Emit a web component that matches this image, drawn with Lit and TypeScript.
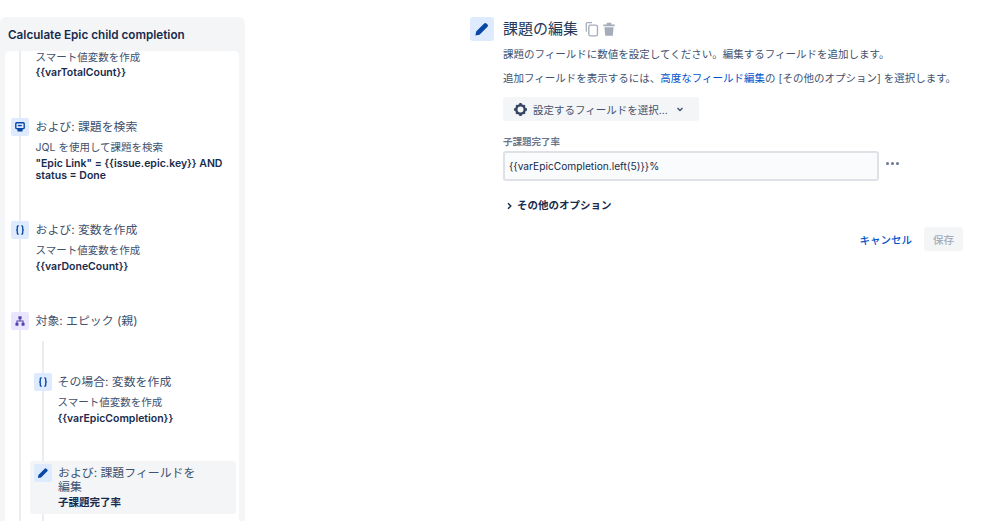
import { LitElement, html, css, svg } from "lit";
import { customElement } from "lit/decorators.js";

const pencil = svg`<path d="M2.2 13.8 L2.8 10.2 L9.9 3.1 a1.4 1.4 0 0 1 2 0 L12.9 4.1 a1.4 1.4 0 0 1 0 2 L5.8 13.2 Z" fill="#0747a6"/>`;
const braces = svg`<path d="M6.6 3.2 H6 a1.1 1.1 0 0 0 -1.1 1.1 V6.9 a1.1 1.1 0 0 1 -1.2 1.1 a1.1 1.1 0 0 1 1.2 1.1 V11.7 a1.1 1.1 0 0 0 1.1 1.1 H6.6 M9.4 3.2 H10 a1.1 1.1 0 0 1 1.1 1.1 V6.9 a1.1 1.1 0 0 0 1.2 1.1 a1.1 1.1 0 0 0 -1.2 1.1 V11.7 a1.1 1.1 0 0 1 -1.1 1.1 H9.4" fill="none" stroke="#0747a6" stroke-width="1.5"/>`;
const search = svg`<rect x="3.2" y="3.2" width="9.6" height="6.6" rx="1" fill="none" stroke="#0747a6" stroke-width="1.6"/><rect x="5.6" y="5.6" width="4.4" height="1.6" fill="#0747a6"/><path d="M4.8 10.4 H11.2 L10.8 13.2 H5.2 Z" fill="#0747a6"/>`;
const tree = svg`<rect x="6.2" y="2.6" width="3.6" height="3.4" fill="#5243aa"/><rect x="2.8" y="10" width="3.4" height="3.4" fill="#5243aa"/><rect x="9.8" y="10" width="3.4" height="3.4" fill="#5243aa"/><path d="M8 5.5 V8 M4.5 10.5 V8 H11.5 V10.5" fill="none" stroke="#5243aa" stroke-width="1.2"/>`;

@customElement("app-root")
export class AppRoot extends LitElement {
  static styles = css`
    :host {
      display: block;
      width: 999px;
      height: 521px;
      overflow: hidden;
      background: #fff;
      font-family: Inter, "Noto Sans CJK JP", sans-serif;
      color: #42526e;
    }
    .page { display: flex; height: 521px; }
    .side {
      width: 245px;
      margin-top: 17px;
      background: #f4f5f7;
      border-radius: 6px 6px 0 0;
      display: flex;
      flex-direction: column;
      flex: none;
    }
    .side-title {
      font-size: 11.7px;
      font-weight: 600;
      color: #172b4d;
      line-height: 16px;
      padding: 10px 0 8px 8px;
    }
    .card {
      flex: 1;
      margin: 0 6px 0 5px;
      background: #fff;
      border-radius: 5px 5px 0 0;
      position: relative;
      overflow: hidden;
    }
    .line { position: absolute; width: 2px; background: #ebecf0; }
    .line.outer { left: 14px; top: 0; bottom: 0; }
    .line.inner { left: 37px; top: 290px; bottom: 0; }
    .step { position: relative; display: flex; gap: 6.5px; padding-left: 6px; }
    .step.nested { padding-left: 29px; gap: 5.5px; }
    .icon {
      width: 18px; height: 18px; flex: none; border-radius: 2px;
      background: #deebff; display: flex; align-items: center; justify-content: center;
    }
    .icon.purple { background: #eae6ff; }
    .icon svg { width: 14px; height: 14px; display: block; }
    .body { min-width: 0; }
    .t { font-size: 11.9px; line-height: 15px; color: #42526e; margin-top: 1px; }
    .d { font-size: 10.5px; line-height: 14px; color: #42526e; margin-top: 7px; }
    .b { font-size: 10.5px; font-weight: 600; line-height: 12.5px; color: #172b4d; margin-top: 3px; }
    .first { padding-left: 30.5px; position: relative; }
    .first .d { margin-top: 0; }
    .first .b { margin-top: 2px; }
    .s2 { margin-top: 38px; }
    .s3 { margin-top: 38px; }
    .s4 { margin-top: 39px; }
    .s5 { margin-top: 43px; }
    .selwrap {
      position: relative;
      margin: 35px 3px 0 25px;
      background: #f4f5f7;
      border-radius: 3px;
      padding: 3px 0 5px 4px;
      display: flex;
      gap: 6px;
      height: 45px;
    }
    .selwrap .t { width: 146px; line-height: 14.5px; margin-top: 2px; }
    .selwrap .b { margin-top: 2px; }

    .main { flex: 1; padding: 17px 0 0 225px; min-width: 0; }
    .head { display: flex; align-items: center; gap: 9px; height: 24px; }
    .head .icon { width: 24px; height: 24px; border-radius: 3px; }
    .head .icon svg { width: 18px; height: 18px; }
    .head h1 { margin: 0; font-size: 15px; font-weight: 400; color: #253858; line-height: 24px; }
    .tools { display: flex; gap: 1.5px; margin-left: -3.5px; margin-top: 0; }
    .tools svg { width: 16px; height: 16px; display: block; }
    .content { padding-left: 33px; }
    .p { font-size: 10.5px; line-height: 14px; margin: 0; color: #42526e; white-space: nowrap; }
    .p1 { margin-top: 7px; }
    .p2 { margin-top: 10px; }
    a { color: #0052cc; text-decoration: none; }
    .select {
      margin-top: 11px;
      width: 196px; height: 24px; box-sizing: border-box;
      background: #f4f5f7; border-radius: 3px;
      display: flex; align-items: center; padding-left: 10px; gap: 5px;
      font-size: 10.5px; color: #42526e;
    }
    .select svg { flex: none; display: block; }
    .select .caret { margin-left: 2px; }
    .label { font-size: 9.5px; font-weight: 600; color: #6b778c; line-height: 12px; margin-top: 15px; }
    .row { display: flex; align-items: center; margin-top: 3px; gap: 7px; }
    .input {
      width: 376px; height: 30px; box-sizing: border-box;
      border: 2px solid #dfe1e6; border-radius: 3px; background: #fafbfc;
      display: flex; align-items: center; padding-left: 4px;
      font-size: 10.2px; color: #172b4d;
    }
    .dots { display: flex; gap: 2px; margin-top: -5px; }
    .dots i { width: 3px; height: 3px; border-radius: 50%; background: #6b778c; display: block; }
    .more {
      display: flex; align-items: center; gap: 4px;
      margin-top: 18px; margin-left: 3px;
      font-size: 10.5px; font-weight: 700; color: #172b4d; line-height: 14px;
    }
    .more svg { display: block; }
    .actions {
      display: flex; justify-content: flex-end; align-items: center; gap: 12px;
      width: 460px; margin-top: 14px;
    }
    .cancel { font-size: 10.5px; color: #0052cc; font-weight: 500; }
    .save {
      width: 39px; height: 24px; border-radius: 3px; background: #f4f5f7;
      color: #a5adba; font-size: 10.5px; font-weight: 500;
      display: flex; align-items: center; justify-content: center;
    }
  `;

  private ic(p: unknown, cls = "") {
    return html`<div class="icon ${cls}"><svg viewBox="0 0 16 16">${p}</svg></div>`;
  }

  render() {
    return html`<div class="page">
      <aside class="side">
        <div class="side-title">Calculate Epic child completion</div>
        <div class="card">
          <div class="line outer"></div>
          <div class="line inner"></div>
          <div class="first">
            <div class="d">スマート値変数を作成</div>
            <div class="b">{{varTotalCount}}</div>
          </div>
          <div class="step s2">
            ${this.ic(search)}
            <div class="body">
              <div class="t">および: 課題を検索</div>
              <div class="d">JQL を使用して課題を検索</div>
              <div class="b">"Epic Link" = {{issue.epic.key}} AND<br />status = Done</div>
            </div>
          </div>
          <div class="step s3">
            ${this.ic(braces)}
            <div class="body">
              <div class="t">および: 変数を作成</div>
              <div class="d">スマート値変数を作成</div>
              <div class="b">{{varDoneCount}}</div>
            </div>
          </div>
          <div class="step s4">
            ${this.ic(tree, "purple")}
            <div class="body"><div class="t">対象: エピック (親)</div></div>
          </div>
          <div class="step nested s5">
            ${this.ic(braces)}
            <div class="body">
              <div class="t">その場合: 変数を作成</div>
              <div class="d">スマート値変数を作成</div>
              <div class="b">{{varEpicCompletion}}</div>
            </div>
          </div>
          <div class="selwrap">
            ${this.ic(pencil)}
            <div class="body">
              <div class="t">および: 課題フィールドを編集</div>
              <div class="b">子課題完了率</div>
            </div>
          </div>
        </div>
      </aside>
      <main class="main">
        <div class="head">
          <div class="icon"><svg viewBox="0 0 16 16">${pencil}</svg></div>
          <h1>課題の編集</h1>
          <div class="tools">
            <svg viewBox="0 0 14 14"><path d="M2 9.5 V2.5 a1 1 0 0 1 1 -1 H7" fill="none" stroke="#a5adba" stroke-width="1.1"/><rect x="4.2" y="3.6" width="7.6" height="9.4" rx="1.4" fill="none" stroke="#a5adba" stroke-width="1.2"/></svg>
            <svg viewBox="0 0 14 14"><path d="M2 3 H12 V4.6 H2 Z M5 1.6 H9 V3 H5 Z M3 5.4 H11 L10.3 13 H3.7 Z" fill="#a5adba"/></svg>
          </div>
        </div>
        <div class="content">
          <p class="p p1">課題のフィールドに数値を設定してください。編集するフィールドを追加します。</p>
          <p class="p p2">追加フィールドを表示するには、<a href="#">高度なフィールド編集</a>の [その他のオプション] を選択します。</p>
          <div class="select">
            <svg width="15" height="15" viewBox="0 0 15 15"><circle cx="7.5" cy="7.5" r="4.2" fill="none" stroke="#344563" stroke-width="2.4"/><path d="M6.3 1 H8.7 V3 H6.3 Z M6.3 12 H8.7 V14 H6.3 Z M1 6.3 H3 V8.7 H1 Z M12 6.3 H14 V8.7 H12 Z M2.4 4 L4 2.4 L5.3 3.7 L3.7 5.3 Z M11 2.4 L12.6 4 L11.3 5.3 L9.7 3.7 Z M2.4 11 L3.7 9.7 L5.3 11.3 L4 12.6 Z M12.6 11 L11 12.6 L9.7 11.3 L11.3 9.7 Z" fill="#344563"/></svg>
            <span>設定するフィールドを選択...</span>
            <svg class="caret" width="10" height="10" viewBox="0 0 10 10"><path d="M2.5 4 L5 6.5 L7.5 4" fill="none" stroke="#42526e" stroke-width="1.4"/></svg>
          </div>
          <div class="label">子課題完了率</div>
          <div class="row">
            <div class="input">{{varEpicCompletion.left(5)}}%</div>
            <div class="dots"><i></i><i></i><i></i></div>
          </div>
          <div class="more">
            <svg width="7" height="8" viewBox="0 0 7 8"><path d="M2 1.2 L4.8 4 L2 6.8" fill="none" stroke="#172b4d" stroke-width="1.4"/></svg>
            <span>その他のオプション</span>
          </div>
          <div class="actions">
            <span class="cancel">キャンセル</span>
            <div class="save">保存</div>
          </div>
        </div>
      </main>
    </div>`;
  }
}
